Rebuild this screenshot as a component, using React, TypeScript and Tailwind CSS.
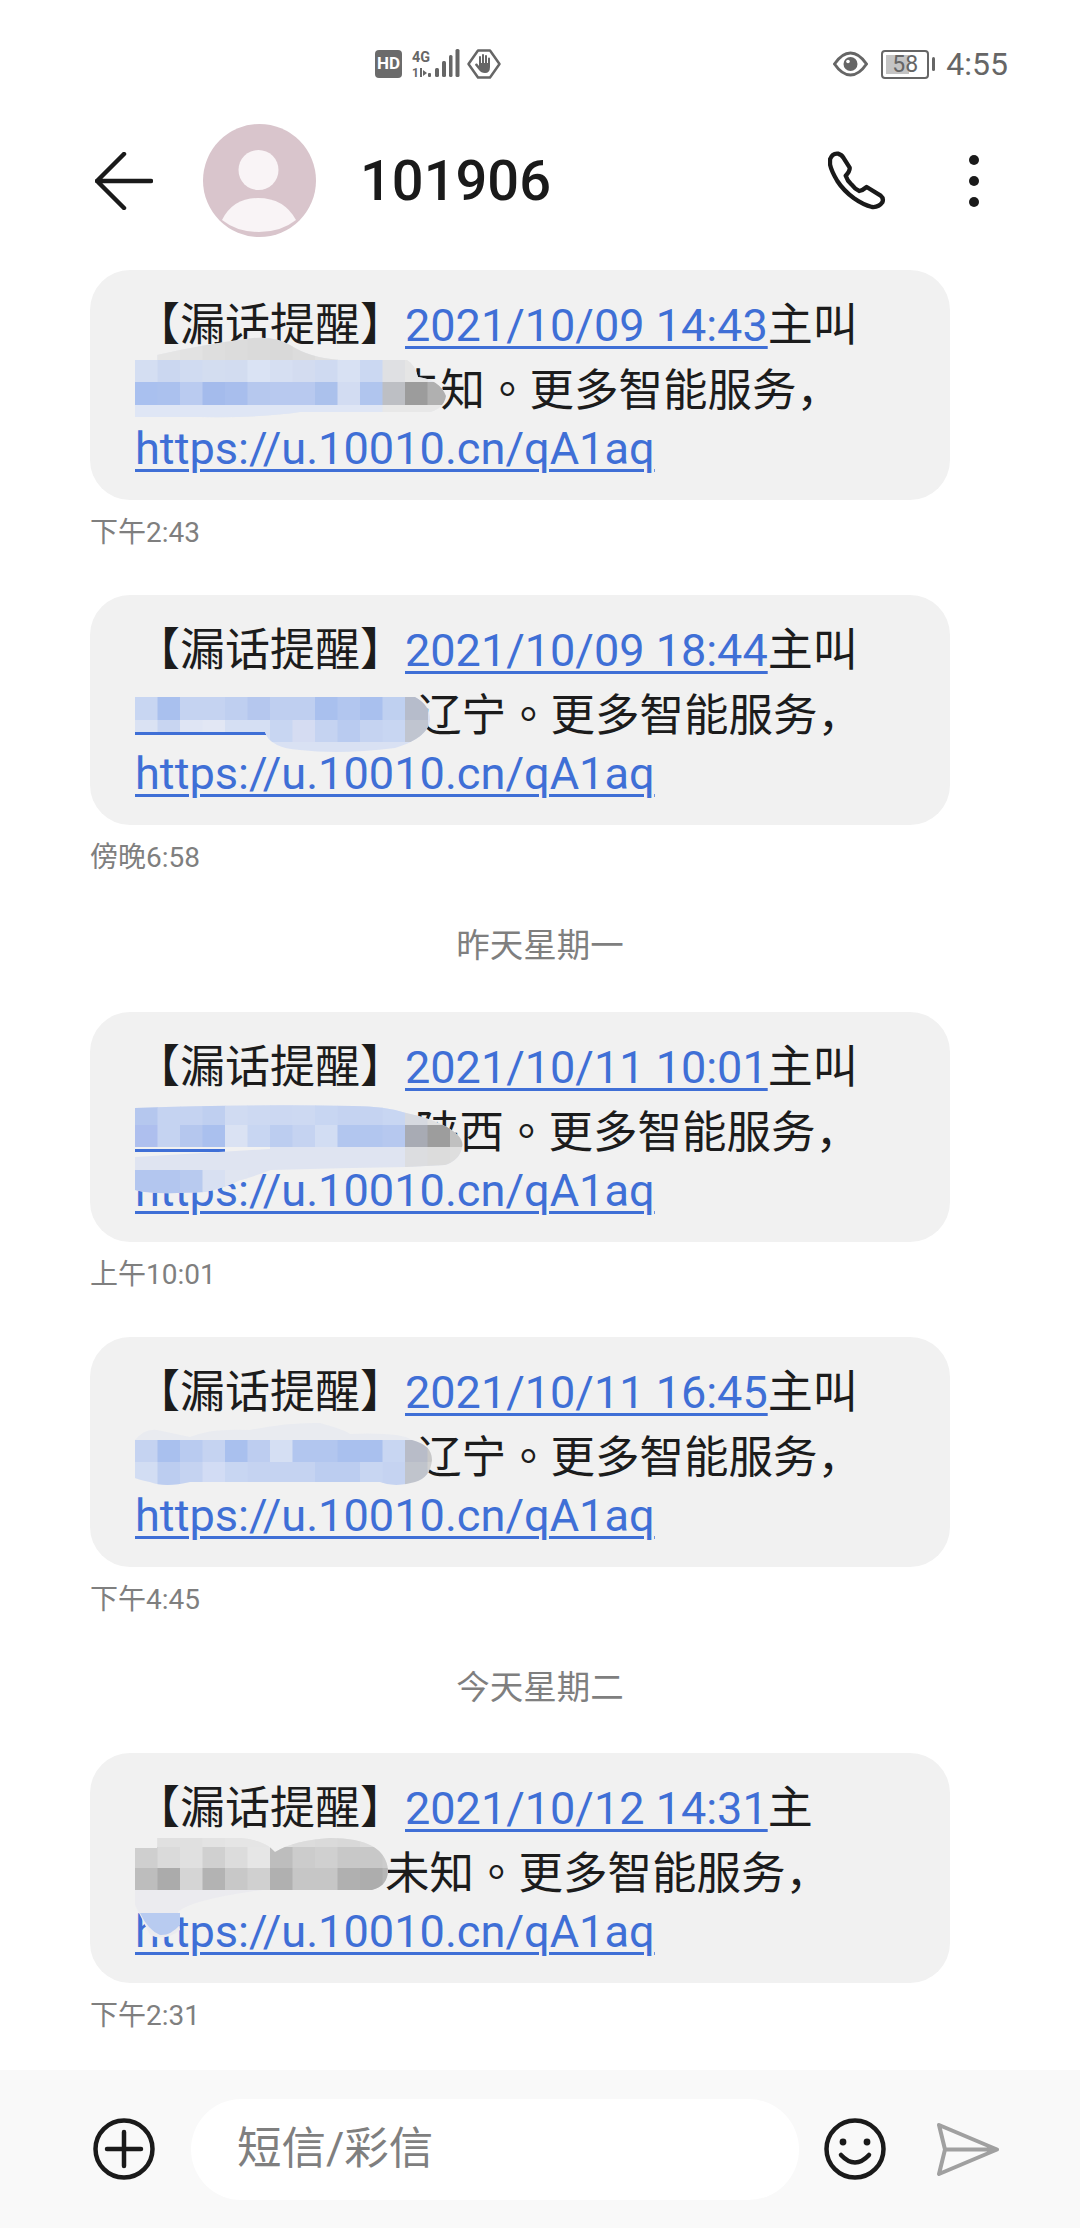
import type { ReactNode } from "react";

type Row = { y: number; h: number; x?: number; colors: string[] };

type Blur = {
  outline: string;
  base: string;
  rows: Row[];
  extra?: ReactNode;
};

// Mosaic cells are 22.5px wide and start at the text's left edge
const CELL = 22.5;
const MOSAIC_LEFT = 135;

function Mosaic({ id, top, blur }: { id: string; top: number; blur: Blur }) {
  return (
    <svg
      className="absolute left-0 top-0 h-[230px] w-[860px] overflow-visible"
      viewBox={`90 ${top} 860 230`}
      aria-hidden
    >
      <clipPath id={id}>
        <path d={blur.outline} />
      </clipPath>
      {blur.extra}
      <g clipPath={`url(#${id})`}>
        <rect x="90" y={top} width="860" height="300" fill={blur.base} />
        {blur.rows.map((row) =>
          row.colors.map((c, i) => (
            <rect
              key={`${row.y}-${i}`}
              x={MOSAIC_LEFT + ((row.x ?? 0) + i) * CELL}
              y={row.y}
              width={CELL + 0.5}
              height={row.h}
              fill={c}
            />
          )),
        )}
      </g>
    </svg>
  );
}

const blurs: Record<string, Blur> = {
  a: {
    base: "#e6e8ee",
    outline:
      "M135 360 H157 V355 Q200 345 253 338 Q275 336 290 345 Q310 358 340 360 H407 Q415 365 418 377 Q440 380 446 396 Q444 408 430 412 H300 Q260 418 200 417 H135 Z",
    rows: [
      { y: 336, h: 24, x: 1, colors: ["#e5e5e5", "#e2e2e2", "#dedede", "#dcdcdc", "#dadada", "#d9d9d9", "#dcdcdc", "#e0e0e0", "#e8e8e8"] },
      { y: 360, h: 22, colors: ["#d4def2", "#cbd7f0", "#d0dbf1", "#d3ddf0", "#d2dcf0", "#dae3f4", "#d6dff2", "#d3dcf0", "#cfdaf1", "#d8e1f3", "#cbd8f2", "#dfe0e3", "#e5e5e5"] },
      { y: 382, h: 23, colors: ["#a9c0ef", "#abc1ee", "#bacbf0", "#a4bbec", "#a8beed", "#b6c8ee", "#b8c9ef", "#b8c9ef", "#abc1ec", "#d2dcf2", "#b0c5ee", "#bdbfc4", "#9c9c9c", "#b0b0b0"] },
      { y: 405, h: 13, colors: ["#dfe6f5", "#dfe6f5", "#dfe6f5", "#dfe6f5", "#dfe6f5", "#dfe6f5", "#dfe6f5", "#dfe6f5", "#dfe6f5", "#dfe6f5", "#dfe6f5", "#e8e8e8", "#e8e8e8", "#e8e8e8"] },
    ],
  },
  b: {
    base: "#d9e1f3",
    outline:
      "M135 697 H415 Q430 705 430 720 Q428 738 395 748 Q340 755 300 750 Q270 748 265 732 H135 Z",
    extra: <rect x="135" y="732" width="135" height="3" fill="#3f6fd6" />,
    rows: [
      { y: 697, h: 23, colors: ["#c8d6f2", "#a9c0ee", "#c5d3f1", "#c5d3f1", "#bfcff0", "#b5c7ee", "#bfcff0", "#bfcff0", "#a9c0ee", "#b2c6ef", "#a9c0ee", "#bfd0f0", "#b6bccb"] },
      { y: 720, h: 22, colors: ["#dae2f3", "#c8d5f1", "#dfe5f4", "#e2e7f4", "#d5dff3", "#d5dff3", "#c8d6f2", "#d5dcf2", "#c5d3f1", "#b9cbf0", "#c5d3f1", "#c8d6f2", "#c0c5d0"] },
    ],
  },
  c: {
    base: "#dfe4f1",
    outline:
      "M135 1108 Q250 1104 353 1106 Q385 1106 406 1113 Q430 1118 447 1127 Q465 1138 462 1147 Q460 1160 445 1165 L406 1167 Q340 1168 271 1170 Q250 1178 240 1180 Q225 1188 205 1192 Q150 1195 135 1190 V1157 L270 1149 V1147 H135 Z",
    extra: <rect x="135" y="1149" width="90" height="3" fill="#3f6fd6" />,
    rows: [
      { y: 1103, h: 22, colors: ["#b5c7ee", "#c5d3f1", "#c5d3f1", "#bfcff0", "#d0dbf2", "#cdd9f2", "#ccd8f2", "#cdd9f2", "#c8d6f2", "#c5d3f1", "#c5d3f1", "#c8d6f2", "#d6d9e0", "#e0e0e0"] },
      { y: 1125, h: 22, colors: ["#aebfee", "#c5d3f1", "#b5c7ee", "#aac0ee", "#dae2f3", "#c8d6f2", "#bccdf0", "#c5d3f1", "#d2ddf3", "#b2c6ef", "#b2c6ef", "#b6c8ef", "#a8abb4", "#9d9d9d", "#c0c0c0"] },
      { y: 1147, h: 23, x: 12, colors: ["#dcdde0", "#dcdcdc", "#dedede"] },
      { y: 1170, h: 25, colors: ["#b3c6ef", "#b3c6ef", "#b8caef", "#d8e0f2", "#e0e5f1"] },
    ],
  },
  d: {
    base: "#e9ebf0",
    outline:
      "M135 1440 Q145 1428 157 1430 L190 1437 Q210 1428 250 1430 Q290 1422 320 1423 Q345 1430 350 1434 Q400 1432 412 1440 Q432 1445 432 1460 Q430 1478 415 1482 Q395 1488 380 1482 H190 Q165 1488 150 1482 Q140 1480 135 1478 Z",
    extra: <rect x="188" y="1475" width="55" height="3" fill="#3f6fd6" />,
    rows: [
      { y: 1440, h: 22, colors: ["#c5d3f1", "#a9c0ee", "#b9cbf0", "#c5d3f1", "#a9c0ee", "#bdcdf0", "#d5dff3", "#b2c6ef", "#b2c6ef", "#a9c0ee", "#a9c0ee", "#c8d6f2", "#b8bcc8", "#c8c8c8"] },
      { y: 1462, h: 26, colors: ["#d2ddf3", "#bccdf0", "#c5d3f1", "#d2dcf4", "#c8d6f2", "#c5d3f1", "#c5d3f1", "#c5d3f1", "#bccdf0", "#bccdf0", "#c8d6f2", "#c5d3f1", "#c0c4cc", "#d0d0d0"] },
    ],
  },
  e: {
    base: "#e6e6e6",
    outline:
      "M135 1848 H157 V1838 H240 Q265 1840 275 1852 Q295 1840 330 1838 Q385 1838 388 1870 Q388 1886 372 1890 H135 Z",
    rows: [
      { y: 1836, h: 11, x: 1, colors: ["#e0e0e0", "#e0e0e0", "#e3e3e3", "#e5e5e5", "#e5e5e5", "#e0e0e0", "#dcdcdc", "#dadada", "#d8d8d8", "#dcdcdc"] },
      { y: 1847, h: 21, colors: ["#cfcfcf", "#dadada", "#e0e0e0", "#d0d0d0", "#dcdcdc", "#e6e6e6", "#bdbdbd", "#cccccc", "#d0d0d0", "#c8c8c8", "#c8c8c8", "#cccccc"] },
      { y: 1868, h: 22, colors: ["#bdbdbd", "#ababab", "#d5d5d5", "#b3b3b3", "#c8c8c8", "#d0d0d0", "#b0b0b0", "#c6c6c6", "#c6c6c6", "#b0b0b0", "#adadad", "#b6b6b6"] },
    ],
    extra: (
      <>
        <path d="M135 1890 H262 Q190 1900 178 1912 L180 1930 Q165 1942 150 1935 L135 1905 Z" fill="#ebebef" />
        <path d="M140 1913 H180 V1925 Q170 1936 160 1935 Q148 1930 140 1913 Z" fill="#b8cbf0" />
      </>
    ),
  },
};

function Bubble({
  id,
  top,
  date,
  tail,
  gap,
  place,
}: {
  id: string;
  top: number;
  date: string;
  tail: string;
  gap: number;
  place: string;
}) {
  return (
    <div className="relative h-[230px] w-[860px] rounded-[40px] bg-[#f1f1f1] px-[45px] pt-[25px] text-[45px] whitespace-nowrap text-[#1c1c1c]">
      <div className="h-[61px] leading-[62.5px]">
        【漏话提醒】
        <span className="text-[#3f6fd6] underline decoration-[3px] underline-offset-[5px]">{date}</span>
        {tail}
      </div>
      <div className="flex h-[61.5px] text-[44.5px] leading-[62.5px]">
        <span className="shrink-0" style={{ width: gap }} />
        <span>
          {place}
          <span className="font-['Noto_Sans_CJK_TC',sans-serif]">。</span>
          更多智能服务，
        </span>
      </div>
      <div className="text-[45.15px] leading-[62.5px] text-[#3f6fd6] underline decoration-[3px] underline-offset-[5px]">
        https://u.10010.cn/qA1aq
      </div>
      <Mosaic id={`blur-${id}`} top={top} blur={blurs[id]} />
    </div>
  );
}

function Time({ children }: { children: string }) {
  return <div className="h-[95px] pt-[14px] text-[28px] leading-[38px] text-[#7f7f7f]">{children}</div>;
}

function DateLabel({ children }: { children: string }) {
  return <div className="h-[92px] w-[900px] text-center text-[33.5px] leading-[52px] text-[#7f7f7f]">{children}</div>;
}

function StatusLeft() {
  return (
    <div className="flex items-center">
      <span className="flex h-[28px] w-[27px] items-center justify-center rounded-[4px] bg-[#6b6b6b] text-[17px] font-bold text-white">
        HD
      </span>
      <svg className="ml-[9px] h-[32px] w-[96px] overflow-visible" viewBox="412 47 96 32" aria-hidden>
        <text x="413" y="61" fontSize="15" fontWeight="700" fill="#666" textLength="18" lengthAdjust="spacingAndGlyphs">
          4G
        </text>
        <text x="413" y="76" fontSize="12" fontWeight="700" fill="#666">
          1
        </text>
        <path d="M421 67 h2 v9 h-2 z M424 69 l4 3 l-4 3 z" fill="#666" />
        <rect x="429" y="72" width="3" height="4" rx="1" fill="#666" />
        <rect x="436" y="67" width="4" height="9" rx="1.5" fill="#666" />
        <rect x="443" y="60" width="4" height="16" rx="1.5" fill="#666" />
        <rect x="450" y="54" width="3.5" height="22" rx="1.5" fill="#666" />
        <rect x="456.5" y="48" width="4" height="28" rx="1.5" fill="#666" />
        <path d="M469.5 63 L479 49.5 H491 L500.5 63 L491 76.5 H479 Z" fill="none" stroke="#666" strokeWidth="2.5" strokeLinejoin="round" />
        <path
          d="M480 56 a1 1 0 0 1 2 0 V62 H483 V54 a1 1 0 0 1 2 0 V62 H486 V55 a1 1 0 0 1 2 0 V62 H489 V57.5 a1 1 0 0 1 2 0 V66 Q491 72 486 72 Q482 72 480 69 L476 64 Q476 62 478 62.5 L480 65 Z"
          fill="#666"
        />
      </svg>
    </div>
  );
}

function StatusRight() {
  return (
    <div className="flex items-center text-[#666]">
      <svg className="h-[26px] w-[35px]" viewBox="0 0 35 26" aria-hidden>
        <path d="M1.5 13 Q9 2 17.5 2 Q26 2 33.5 13 Q26 24 17.5 24 Q9 24 1.5 13 Z" fill="none" stroke="#666" strokeWidth="3" />
        <circle cx="17.5" cy="13" r="7" fill="#666" />
        <circle cx="15" cy="10.5" r="1.8" fill="#fff" />
      </svg>
      <div className="relative ml-[13px] flex h-[29px] w-[48px] items-center justify-center rounded-[4px] border-[2.5px] border-[#666] text-[23px] leading-none">
        <span className="absolute bottom-[3px] left-[3px] top-[3px] w-[23px] bg-[#c4c4c4]" />
        <span className="relative">58</span>
      </div>
      <span className="ml-[3px] h-[14px] w-[3px] rounded-sm bg-[#666]" />
      <span className="ml-[11px] text-[32px] leading-none">4:55</span>
    </div>
  );
}

function Header() {
  return (
    <header className="flex h-[113px] shrink-0 items-center pl-[95px] pr-[101px]">
      <svg className="h-[58px] w-[58px]" viewBox="95 151 58 58" fill="none" stroke="#1a1a1a" strokeWidth="4.5" strokeLinecap="round" strokeLinejoin="round" aria-hidden>
        <path d="M124 153 L97 180 L124 207 M97 180 H151" />
      </svg>
      <svg className="ml-[50px] h-[113px] w-[113px]" viewBox="0 0 113 113" aria-hidden>
        <circle cx="56.5" cy="56.5" r="56.5" fill="#d9c5cc" />
        <circle cx="55.5" cy="46" r="20" fill="#f9f4f6" />
        <path d="M19 96 Q30 74 55 74 Q81 74 93 96 Q78 108 56 108 Q34 108 19 96 Z" fill="#f9f4f6" />
      </svg>
      <span className="ml-[44px] text-[56px] font-medium leading-none text-[#1a1a1a]">101906</span>
      <svg className="ml-auto h-[60px] w-[60px]" viewBox="82 60 180 180" fill="none" stroke="#1a1a1a" strokeWidth="13" strokeLinejoin="round" aria-hidden>
        <path d="M88 85 Q95 66 112 68 Q124 72 128 80 L147 110 Q148 120 135 134 Q140 150 152 160 Q162 174 176 180 Q186 178 198 168 L240 194 Q250 202 245 214 Q234 230 214 228 Q188 222 160 202 Q128 178 110 150 Q92 120 88 100 Z" />
      </svg>
      <div className="ml-[81px] flex flex-col gap-[11px]">
        <span className="h-[10px] w-[10px] rounded-full bg-[#1a1a1a]" />
        <span className="h-[10px] w-[10px] rounded-full bg-[#1a1a1a]" />
        <span className="h-[10px] w-[10px] rounded-full bg-[#1a1a1a]" />
      </div>
    </header>
  );
}

function Composer() {
  return (
    <footer className="flex h-[158px] shrink-0 items-center bg-[#f9f9f9] pl-[93px]">
      <svg className="h-[62px] w-[62px]" viewBox="0 0 62 62" fill="none" stroke="#1a1a1a" strokeWidth="4.5" strokeLinecap="round" aria-hidden>
        <circle cx="31" cy="31" r="28.5" />
        <path d="M14 31 H48 M31 14 V48" />
      </svg>
      <div className="ml-[36px] flex h-[101px] w-[608px] items-center rounded-full bg-white pl-[46px] text-[44.5px] text-[#7f7f7f]">
        短信/彩信
      </div>
      <svg className="ml-[25px] h-[62px] w-[62px]" viewBox="0 0 62 62" fill="none" stroke="#1a1a1a" strokeWidth="4.5" strokeLinecap="round" aria-hidden>
        <circle cx="31" cy="31" r="28.5" />
        <circle cx="19" cy="24" r="3.4" fill="#1a1a1a" stroke="none" />
        <circle cx="43" cy="24" r="3.4" fill="#1a1a1a" stroke="none" />
        <path d="M17 37 Q31 52 45 37" />
      </svg>
      <svg className="ml-[50px] h-[54px] w-[66px]" viewBox="935 2121 66 54" fill="none" stroke="#a0a0a0" strokeWidth="4" strokeLinecap="round" strokeLinejoin="round" aria-hidden>
        <path d="M938 2124 L996 2148.5 L938 2173 L944 2148.5 Z M944 2148.5 H996" />
      </svg>
    </footer>
  );
}

export default function App() {
  return (
    <div className="flex h-[2228px] w-full flex-col overflow-hidden bg-white font-[Roboto,'Noto_Sans_CJK_SC',sans-serif]">
      <div className="flex h-[124px] shrink-0 items-start justify-between pl-[375px] pr-[72px] pt-[48px]">
        <StatusLeft />
        <StatusRight />
      </div>
      <Header />

      <main className="min-h-0 flex-1 overflow-hidden pl-[90px] pt-[33px]">
        <Bubble id="a" top={270} date="2021/10/09 14:43" tail="主叫" gap={261} place="未知" />
        <Time>下午2:43</Time>
        <Bubble id="b" top={595} date="2021/10/09 18:44" tail="主叫" gap={282} place="辽宁" />
        <Time>傍晚6:58</Time>
        <DateLabel>昨天星期一</DateLabel>
        <Bubble id="c" top={1012} date="2021/10/11 10:01" tail="主叫" gap={280} place="陕西" />
        <Time>上午10:01</Time>
        <Bubble id="d" top={1337} date="2021/10/11 16:45" tail="主叫" gap={282} place="辽宁" />
        <Time>下午4:45</Time>
        <div className="-mb-px">
          <DateLabel>今天星期二</DateLabel>
        </div>
        <Bubble id="e" top={1753} date="2021/10/12 14:31" tail="主" gap={250} place="未知" />
        <Time>下午2:31</Time>
      </main>

      <Composer />
    </div>
  );
}
